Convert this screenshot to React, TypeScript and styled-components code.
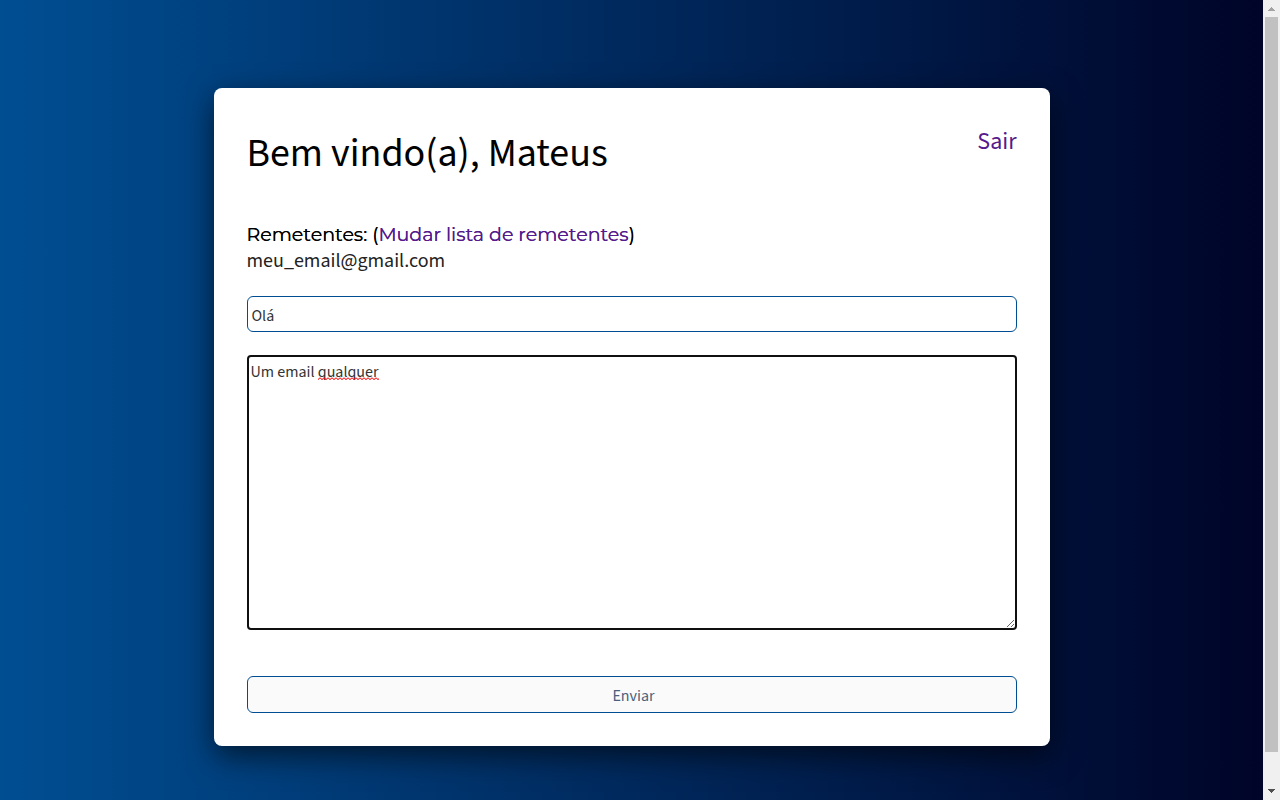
import React, { useState } from "react";
import styled, { createGlobalStyle } from "styled-components";

const textFont = `"Source Sans 3", "Source Sans Pro", "Noto Sans CJK JP", "Noto Sans", sans-serif`;

const GlobalStyle = createGlobalStyle`
  *, *::before, *::after { box-sizing: border-box; }
  body {
    margin: 0;
    font-family: ${textFont};
    color: #000;
  }
`;

const Viewport = styled.div`
  display: flex;
  height: 100vh;
  overflow: hidden;
  background: #f0f0f0;
`;

const Page = styled.main`
  flex: 1;
  min-width: 0;
  padding: 88px 24px;
  background: linear-gradient(to left, #000428, #004e92);
`;

const Card = styled.section`
  max-width: 836px;
  margin: 0 auto;
  padding: 33px;
  border-radius: 8px;
  background: #fff;
  box-shadow: 0 10px 30px rgba(0, 0, 0, 0.6);
`;

const Header = styled.header`
  display: flex;
  justify-content: space-between;
  align-items: flex-start;
  padding-top: 4px;
  margin-bottom: 39px;
`;

const Title = styled.h1`
  margin: 0;
  font-size: 40px;
  font-weight: 400;
  line-height: 58px;
`;

const Link = styled.a`
  color: #551a8b;
  text-decoration: none;
`;

const ExitLink = styled(Link)`
  font-size: 24px;
  line-height: 33px;
`;

const Senders = styled.h2`
  margin: 0;
  font-family: Montserrat, Inter, sans-serif;
  font-size: 19px;
  font-weight: 400;
  line-height: 25px;
  text-shadow: 0 0 0;

  ${Link} {
    text-shadow: 0 0 0;
  }
`;

const Sender = styled.p`
  margin: 0 0 20px;
  color: #222;
  font-size: 20px;
  line-height: 29px;
`;

const Form = styled.form`
  display: flex;
  flex-direction: column;
`;

const SubjectField = styled.input`
  height: 36px;
  margin-bottom: 23px;
  padding: 4px 4px 1px;
  border: 1px solid #004e92;
  border-radius: 6px;
  background: #fff;
  color: #333;
  font: 400 16px ${textFont};
  outline: none;
`;

const MessageBox = styled.div`
  position: relative;
  display: flex;
  margin-bottom: 46px;
`;

const MessageField = styled.textarea`
  flex: 1;
  min-width: 0;
  height: 275px;
  padding: 4px 2px;
  border: 2px solid #101010;
  border-radius: 4px;
  background: #fff;
  color: #333;
  font: 400 16px/23px ${textFont};
  outline: none;
  resize: vertical;
`;

const SpellingMark = styled.svg`
  position: absolute;
  left: 71px;
  top: 22px;
  pointer-events: none;
`;

const SendButton = styled.button`
  height: 37px;
  padding: 4px 6px 1px 10px;
  border: 1px solid #004e92;
  border-radius: 6px;
  background: #fafafa;
  color: #4a5f7d;
  font: 400 16px ${textFont};
`;

const ScrollBar = styled.div`
  display: flex;
  flex-direction: column;
  width: 17px;
  height: 100%;
  padding: 0 2px;
  background: #f0f0f0;
`;

const ScrollThumb = styled.div`
  flex: 1;
  margin-bottom: 31px;
  background: #c1c1c1;
`;

const ScrollArrow = styled.svg`
  flex: none;
  width: 13px;
  height: 17px;
`;

export default function App() {
  const [subject, setSubject] = useState("Olá");
  const [message, setMessage] = useState("Um email qualquer");

  return (
    <>
      <GlobalStyle />
      <Viewport>
        <Page>
          <Card>
            <Header>
              <Title>Bem vindo(a), Mateus</Title>
              <ExitLink href="#sair">Sair</ExitLink>
            </Header>
            <Senders>
              Remetentes: (<Link href="#remetentes">Mudar lista de remetentes</Link>)
            </Senders>
            <Sender>meu_email@gmail.com</Sender>
            <Form onSubmit={(event) => event.preventDefault()}>
              <SubjectField
                aria-label="Assunto"
                value={subject}
                onChange={(event) => setSubject(event.target.value)}
              />
              <MessageBox>
                <MessageField
                  aria-label="Mensagem"
                  spellCheck={false}
                  value={message}
                  onChange={(event) => setMessage(event.target.value)}
                />
                <SpellingMark width="61" height="4" viewBox="0 0 61 4" aria-hidden="true">
                  <defs>
                    <pattern id="wave" width="4" height="4" patternUnits="userSpaceOnUse">
                      <path d="M-1 1.5 L0 2.5 L2 0.8 L4 2.5 L5 1.5" fill="none" stroke="#f00" />
                    </pattern>
                  </defs>
                  <rect width="61" height="4" fill="url(#wave)" />
                </SpellingMark>
              </MessageBox>
              <SendButton type="submit">Enviar</SendButton>
            </Form>
          </Card>
        </Page>
        <ScrollBar aria-hidden="true">
          <ScrollArrow viewBox="0 0 13 17">
            <path d="M3 11h7v-1h-1v-1h-1v-1h-1v-1h-1v1h-1v1h-1v1h-1z" fill="#a3a3a3" />
          </ScrollArrow>
          <ScrollThumb />
          <ScrollArrow viewBox="0 0 13 17">
            <path d="M3 6h7v1h-1v1h-1v1h-1v1h-1v-1h-1v-1h-1v-1h-1z" fill="#505050" />
          </ScrollArrow>
        </ScrollBar>
      </Viewport>
    </>
  );
}
